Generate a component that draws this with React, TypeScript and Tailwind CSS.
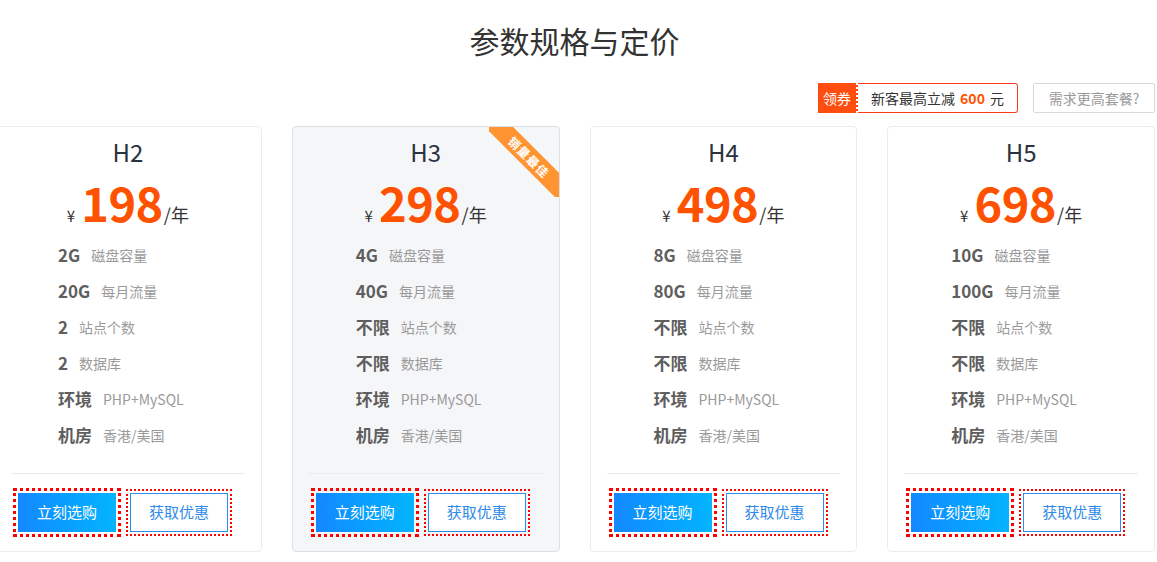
const plans = [
  { name: 'H2', price: '198', disk: '2G', flow: '20G', sites: '2', db: '2' },
  { name: 'H3', price: '298', disk: '4G', flow: '40G', sites: '不限', db: '不限', hot: true },
  { name: 'H4', price: '498', disk: '8G', flow: '80G', sites: '不限', db: '不限' },
  { name: 'H5', price: '698', disk: '10G', flow: '100G', sites: '不限', db: '不限' },
];

const font = { fontFamily: '"Noto Sans CJK SC", "Noto Sans", sans-serif' };

const PlanCard = ({ plan }: { plan: (typeof plans)[number] }) => {
  const rows = [
    [plan.disk, '磁盘容量'],
    [plan.flow, '每月流量'],
    [plan.sites, '站点个数'],
    [plan.db, '数据库'],
    ['环境', 'PHP+MySQL'],
    ['机房', '香港/美国'],
  ];
  return (
    <div
      className={`relative rounded-[4px] border pt-[10px] pb-[19px] ${
        plan.hot ? 'bg-[#f5f6f8] border-[#dcdfe4]' : 'bg-white border-[#ececec]'
      }`}
    >
      {plan.hot && (
        <div className="absolute top-0 right-0 w-[70px] h-[70px] overflow-hidden rounded-tr-[4px]">
          <div className="absolute left-[-10px] top-[20px] w-[100px] h-[20px] rotate-45 bg-[#ff9431] flex items-center justify-center text-white text-[12px] font-bold leading-none tracking-[1px]">
            销量最佳
          </div>
        </div>
      )}
      <div className="h-[30px] text-center text-[24px] leading-[30px] text-[#2b3240]">{plan.name}</div>
      <div className="mt-[7px] h-[56px] flex items-baseline justify-center leading-[56px]">
        <span className="text-[15px] text-[#333] mr-[6px]">¥</span>
        <span className="text-[47px] font-bold text-[#ff5200] tracking-[-0.5px]">{plan.price}</span>
        <span className="text-[18px] text-[#333] ml-[1px]">/年</span>
      </div>
      <div className="mt-[7px] pl-[63px]">
        {rows.map(([v, l]) => (
          <div key={l} className="h-[36px] flex items-center">
            <span className="text-[17px] font-bold text-[#5e5e5e] mr-[11px]">{v}</span>
            <span className="text-[14px] text-[#9a9a9a]">{l}</span>
          </div>
        ))}
      </div>
      <div className="mx-[16px] mt-[20px] border-t border-[#ebebeb]" />
      <div className="mt-[19px] pl-[23px] flex gap-[14px]">
        <button className="w-[98px] h-[39px] text-[15px] text-white bg-gradient-to-r from-[#1488ff] to-[#05b4fd] outline-[3px] outline-dotted outline-[#ff0000] outline-offset-[2px]">
          立刻选购
        </button>
        <button className="w-[98px] h-[39px] text-[15px] text-[#2f8ae8] bg-white border border-[#2d8cf0] outline-[2px] outline-dotted outline-[#ff0000] outline-offset-[2px]">
          获取优惠
        </button>
      </div>
    </div>
  );
};

export default function App() {
  return (
    <div className="w-full h-[562px] overflow-hidden bg-white" style={font}>
      <div className="w-[1161px] ml-[-6px]">
        <h1 className="pt-[20px] text-center text-[30px] leading-[40px] text-[#333]">参数规格与定价</h1>
        <div className="mt-[23px] flex justify-end gap-[15px]">
          <div className="flex h-[30px] w-[200px]">
            <div className="w-[40px] bg-[#ff4d10] border-r-[2px] border-dotted border-white text-white text-[14px] flex items-center justify-center">
              领券
            </div>
            <div className="flex-1 flex items-center justify-center border border-l-0 border-[#ff3a1c] rounded-r-[3px] text-[14px] text-[#333]">
              新客最高立减<span className="mx-[5px] font-bold text-[#ff5200]">600</span>元
            </div>
          </div>
          <div className="w-[122px] h-[30px] border border-[#d9d9d9] rounded-[2px] flex items-center justify-center text-[14px] text-[#999]">
            需求更高套餐?
          </div>
        </div>
        <div className="mt-[13px] grid grid-cols-4 gap-[30px]">
          {plans.map((p) => (
            <PlanCard key={p.name} plan={p} />
          ))}
        </div>
      </div>
    </div>
  );
}
